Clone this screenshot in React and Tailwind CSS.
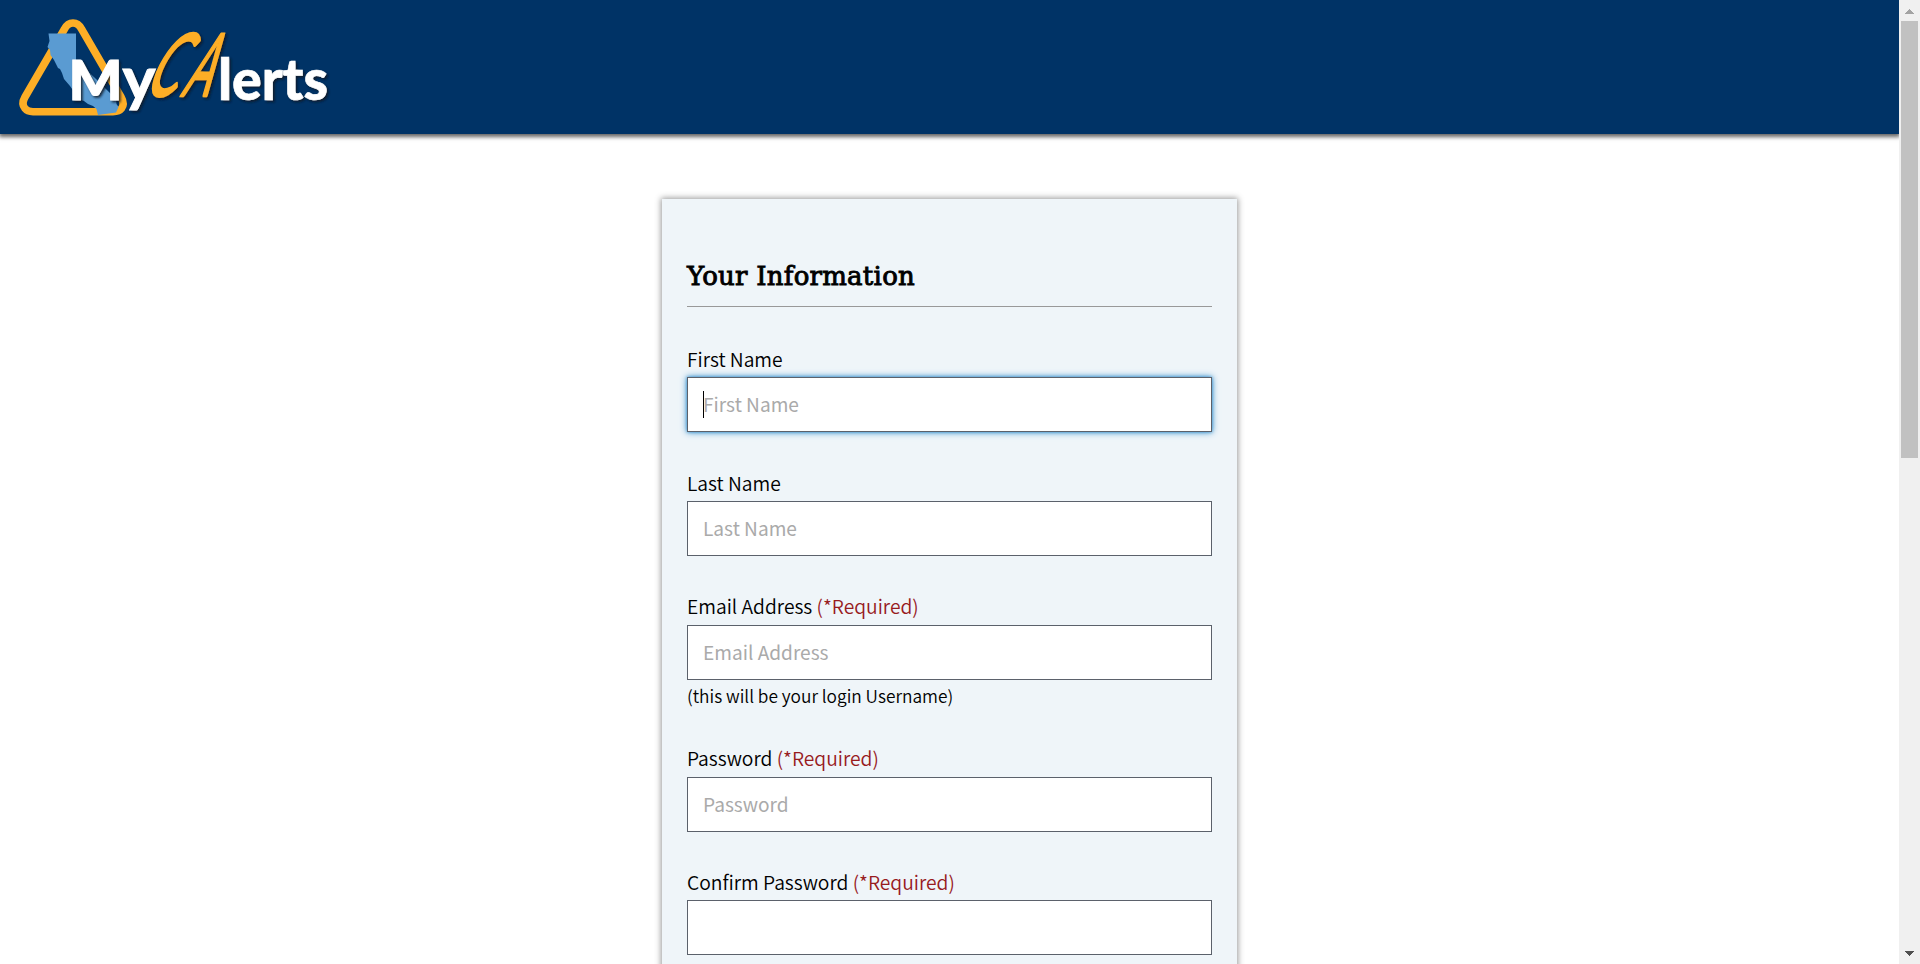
const SANS = "font-['Noto_Sans_CJK_SC','Open_Sans',sans-serif]";

function Logo() {
  const lato = { fontFamily: "Lato, sans-serif" };
  return (
    <svg width="340" height="134" viewBox="0 0 340 134" role="img" aria-label="MyCAlerts" className="block shrink-0">
      <defs>
        <filter id="shade" x="-10%" y="-10%" width="130%" height="130%">
          <feDropShadow dx="1.8" dy="1.8" stdDeviation="1" floodColor="#0a1526" floodOpacity="0.85" />
        </filter>
      </defs>
      <path d="M64.500 29 L25 97 Q21 104 25 108.500 Q27.500 111.700 33 111.700 H113 Q119 111.700 121.500 108.500 Q125 104 121 97 L81.500 29 Q78.500 23 73 23 Q67.500 23 64.500 29 Z" fill="none" stroke="#fdae26" strokeWidth="7.600" />
      <path d="M48.500 33.500 H76 V60 L96 79 L103 86 L116 99 L116.500 104 L118.500 107 L116 112.500 L98 115 L96.500 109 L93 106 L88 104 L84 101 L74 98 L73.500 91 L70 86 L64 79 L62 73 L60 69 L58 68 L54 60 L50.500 55 L50 50 L47.500 47 L49.500 41 Z" fill="#5a9bd2" />
      <g fontWeight="900" fill="#fff" stroke="#fff" strokeWidth="1" style={lato} filter="url(#shade)">
        <text x="68.500" y="100" fontSize="56" textLength="54" lengthAdjust="spacingAndGlyphs">M</text>
        <text x="122.500" y="100" fontSize="60" fontWeight="700" textLength="33" lengthAdjust="spacingAndGlyphs">y</text>
      </g>
      <g filter="url(#shade)" fill="#fdae26" stroke="#fdae26" strokeWidth="2.600" strokeLinejoin="round" style={lato} fontWeight="400">
        <text transform="translate(142 96) skewX(-27) scale(.54 1)" fontSize="87">C</text>
        <text transform="translate(180 96) skewX(-25) scale(.46 1)" fontSize="87">A</text>
      </g>
      <g fontWeight="900" fill="#fff" stroke="#fff" strokeWidth=".6" style={lato} filter="url(#shade)">
        <text x="218" y="100" fontSize="57" textLength="110" lengthAdjust="spacingAndGlyphs">lerts</text>
      </g>
    </svg>
  );
}

function Field({ label, required, placeholder, hint, focused, className = "", labelClass = "h-[33px]" }) {
  return (
    <div className={className}>
      <label className={`block whitespace-nowrap text-[19.25px] leading-[30px] font-[350] text-black ${labelClass}`}>
        {label}
        {required && <span className="text-[#981b1e]"> (*Required)</span>}
      </label>
      <div
        className={
          focused
            ? "flex h-[55px] items-center border border-[#5b616b] bg-white px-[15px] shadow-[0_0_3px_#3e94cf,0_0_7px_#3e94cf]"
            : "flex h-[55px] items-center border border-[#5b616b] bg-white px-[15px]"
        }
      >
        {focused && <span className="-mr-px h-[27px] w-px bg-black" />}
        <span className="pb-[2px] text-[19.1px] leading-[30px] text-[#aaaaaa]">{placeholder}</span>
      </div>
      {hint && <p className="h-[28px] whitespace-nowrap text-[17.3px] leading-[32px] font-[350] text-black">{hint}</p>}
    </div>
  );
}

export default function App() {
  return (
    <div className={`flex h-[964px] w-full overflow-hidden bg-white ${SANS}`}>
      <div className="flex h-full min-w-0 flex-1 flex-col items-center overflow-hidden">
        <header className="flex h-[134px] w-full shrink-0 bg-[#003366] shadow-[0_2px_4px_1px_#666]">
          <Logo />
        </header>
        <main className="mt-[65px] h-[900px] w-[575px] shrink-0 bg-[#eff5f9] px-[25px] pt-[57px] shadow-[0_0_6px_1px_#999]">
          <h2 className="h-[50px] whitespace-nowrap font-['DejaVu_Serif',serif] text-[26px] leading-[40px] font-normal tracking-[0.25px] text-black [-webkit-text-stroke:0.9px_black]">Your Information</h2>
          <hr className="border-t border-[#999]" />
          <form>
            <Field label="First Name" placeholder="First Name" focused className="mt-[37px]" />
            <Field label="Last Name" placeholder="Last Name" className="mt-[36px]" />
            <Field label="Email Address" required placeholder="Email Address" hint="(this will be your login Username)" className="mt-[35px]" labelClass="h-[34px]" />
            <Field label="Password" required placeholder="Password" className="mt-[35px]" labelClass="h-[34px]" />
            <Field label="Confirm Password" required placeholder="" className="mt-[35px]" />
          </form>
        </main>
      </div>
      <div className="flex h-full w-[21px] shrink-0 flex-col items-center bg-[#f0f0f0]">
        <svg width="21" height="21" className="block shrink-0" shapeRendering="crispEdges"><path d="M6 14 L10.500 9 L15 14 Z" fill="#a3a3a3" /></svg>
        <div className="h-[437px] w-[17px] bg-[#c1c1c1]" />
        <svg width="21" height="21" className="mt-auto block shrink-0" shapeRendering="crispEdges"><path d="M6 8 L15 8 L10.500 13 Z" fill="#505050" /></svg>
      </div>
    </div>
  );
}
